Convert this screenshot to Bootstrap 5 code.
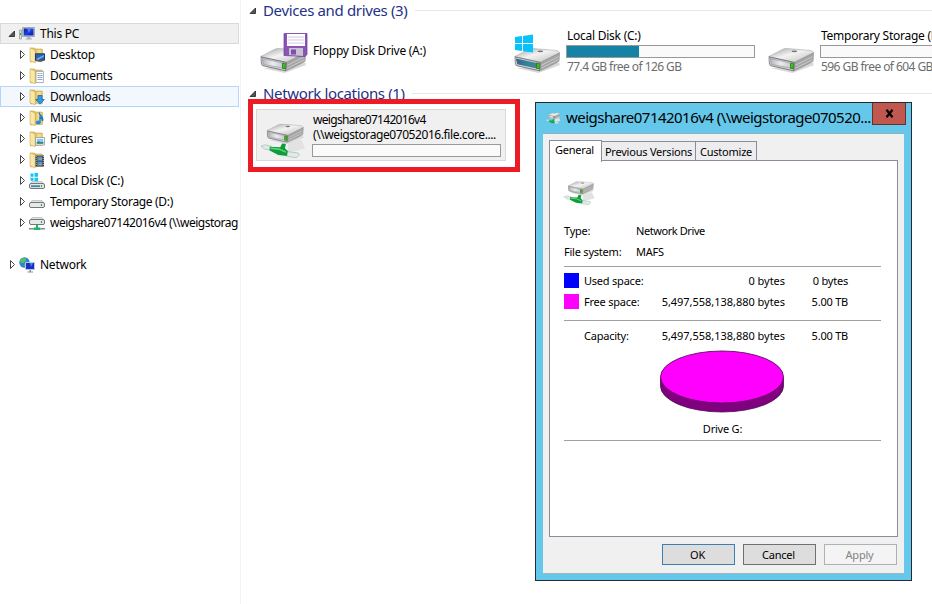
<!DOCTYPE html>
<html lang="en">
<head>
<meta charset="utf-8">
<meta name="viewport" content="width=device-width, initial-scale=1">
<title>This PC</title>
<link href="https://cdn.jsdelivr.net/npm/bootstrap@5.3.0/dist/css/bootstrap.min.css" rel="stylesheet">
<style>
body{width:932px;height:604px;overflow:hidden;background:#fff;color:#000;font-family:"Noto Sans","Open Sans",sans-serif;font-size:12px;line-height:15px;letter-spacing:-.25px}
svg{display:block;flex:none}
.side{width:241px;height:604px;padding-top:23px;border-right:1px solid #f3f3f3}
.node{height:21px;width:239px;white-space:nowrap;overflow:hidden;border:1px solid transparent}
.node.top{padding-left:7px}
.node.sub{padding-left:17px}
.node.current{background:#f0f0f0;border-color:#d9d9d9}
.node.hover{background:#f3f8ff;border-color:#b5d5fb}
.node .tw{width:8px;height:9px;margin-right:3px}
.node .ic{width:16px;height:16px;margin-right:5px}
.tight{letter-spacing:-.7px}
.tight2{letter-spacing:-.42px}
.main{width:691px;height:604px;overflow:hidden}
.group{height:22px;padding:0 0 2px 8px;color:#1e3287;font-size:15px;line-height:20px;letter-spacing:-.35px;white-space:nowrap}
.group span{padding-left:6px}
.group .rule{height:1px;background:#dfe7f1;margin-left:7px}
.tiles{height:61px;width:790px;padding-left:15px}
.tile{width:254px;white-space:nowrap;padding-bottom:1px}
.tile .info{padding-left:5px;margin-top:-3px}
.art{width:52px;height:46px}
.meter{width:189px;height:13px;border:1px solid #999;background:#fafafa;margin:2px 0 1px}
.tile .meter{margin-left:-1px}
.meter div{height:100%;background:#1583a6}
.muted{color:#6d6d6d;letter-spacing:-.56px}
.picked{width:250px;height:52px;margin:4px 0 0 15px;background:#f0f0f0;border:1px solid #d9d9d9;white-space:nowrap}
.picked .info{padding-top:2px}
.picked .info>div:not(.meter){padding-left:1px}
.marker{left:248px;top:99px;width:272px;height:73px;border:5px solid #ed1c24}
.dialogwin{left:535px;top:102px;width:377px;height:479px;background:#65c8ea;border:1px solid #252b33;padding:0 7px 7px;letter-spacing:-.22px}
.titlebar{height:30px;font-size:15px;line-height:29px;letter-spacing:-.53px;padding-left:3px;white-space:nowrap}
.titlebar span{padding-left:5px}
.shut{width:34px;height:22px;background:#c1584f;border:1px solid #5f3331;border-top:0;margin-right:-2px;flex:none}
.client{height:441px;background:#f0f0f0;border-top:1px solid #8db4c4;border-bottom:1px solid #a5b5bd;padding:6px 6px 0;font-size:11px;line-height:14px}
.tabrow{height:20px}
.tabx{height:19px;border:1px solid #8b8b99;border-bottom:0;border-left:0;padding-top:3px;text-align:center;white-space:nowrap;background:#ededf0}
.tabx.on{height:22px;width:53px;border-left:1px solid #8b8b99;background:#fff;position:relative;z-index:1;padding:2px 2px 0 0;margin-bottom:-2px}
.sheet{height:377px;width:349px;border:1px solid #8b8b99;background:#fff;padding:18px 16px 0 14px}
.facts{padding:13px 0 4px}
.line{height:21px;white-space:nowrap}
.sep{height:1px;background:#a0a0a0}
.usage{padding-top:3px}
.sw{width:15px;height:15px;margin-right:5px}
.k{width:72px}.k2{width:57px}.num{width:144px;text-align:right;letter-spacing:-.03px}.sz{width:63px;text-align:right}
.drivename{padding:8px 0 4px}
.pie{margin-left:95px}
.buttons{padding-top:7px;padding-right:1px}
.pushb{width:73px;height:21px;border:1px solid #707070;background:#ddd;text-align:center;line-height:19px;color:#000;padding:0 2px 0 0}
.pushb.def{border-color:#3c7fb1}.pushb.off{border-color:#adb2b5;background:#f4f4f4;color:#838383}
</style>
<script src="https://cdn.jsdelivr.net/npm/bootstrap@5.3.0/dist/js/bootstrap.bundle.min.js"></script>
</head>
<body>
<svg width="0" height="0" class="position-absolute">
<defs>
<linearGradient id="gTop" x1="0" y1="0" x2="1" y2="1"><stop offset="0" stop-color="#9c9c9c"/><stop offset=".45" stop-color="#f3f3f3"/><stop offset="1" stop-color="#b9b9b9"/></linearGradient>
<linearGradient id="gFront" x1="0" y1="0" x2="1" y2="0"><stop offset="0" stop-color="#b4b4ba"/><stop offset=".5" stop-color="#ececf4"/><stop offset="1" stop-color="#c9c9cf"/></linearGradient>
<linearGradient id="gSys" x1="0" y1="0" x2="1" y2="0"><stop offset="0" stop-color="#3c5f83"/><stop offset=".6" stop-color="#2f88a5"/><stop offset="1" stop-color="#557c82"/></linearGradient>
<linearGradient id="gFold" x1="0" y1="0" x2="1" y2="0"><stop offset="0" stop-color="#dcb84f"/><stop offset=".5" stop-color="#f7e294"/><stop offset="1" stop-color="#e8c869"/></linearGradient>
<linearGradient id="gScr" x1="0" y1="0" x2="1" y2="1"><stop offset="0" stop-color="#0a1c9c"/><stop offset=".5" stop-color="#1b3fe0"/><stop offset="1" stop-color="#0818a0"/></linearGradient>
</defs>
<symbol id="box" viewBox="0 0 48 26"><path d="M3 21l22 5 22-8v-3z" fill="#d9d9d9"/><path d="M0 9L15 1.200Q17 .3 19 .5L44 2.600Q46.500 3.500 47 5L27 15z" fill="url(#gTop)" stroke="#9a9a9a" stroke-width=".5"/><path d="M27 15L47 5l-.5 8.500Q46 15 26 24z" fill="#a4a4a4" stroke="#888" stroke-width=".5"/><path d="M28 18l18-9M28 21l18-9" stroke="#d0d0d0" stroke-width=".9"/><path d="M.5 9.200L27 15l-1 8.700L2 18.300Q.5 17 .5 9.200z" fill="#d5d5d5" stroke="#6c6c6c" stroke-width=".9"/><ellipse cx="27" cy="3.500" rx="3" ry="1" fill="#777"/></symbol>
<symbol id="plain" viewBox="0 0 48 26"><use href="#box" width="48" height="26"/><path d="M2 11l21 4.600v5.200L3 17z" fill="url(#gFront)" stroke="#8d8d94" stroke-width=".6"/><path d="M23.200 15.500l2.800.5-.4 5.600-2.600-.4z" fill="#3fcf18" stroke="#0c6107" stroke-width=".7"/></symbol>
<symbol id="system" viewBox="0 0 48 26"><use href="#box" width="48" height="26"/><path d="M1.500 10.800l22 4.800-.4 5.600L3 17z" fill="url(#gSys)"/><path d="M23.200 15.500l2.800.5-.4 5.600-2.600-.4z" fill="#3fcf18" stroke="#0c6107" stroke-width=".7"/></symbol>
<symbol id="netdrive" viewBox="0 0 48 38"><path d="M28 31l18-5-4-9-14 3z" fill="#e2e2e2"/><use href="#plain" x="6" y="0" width="39" height="22"/><path d="M0 24l4-1.500 7 1.500v4l-7-1z" fill="#e0ebe7" stroke="#8fb0a5" stroke-width=".6"/><path d="M27 29.500l12 1.500 1 2-3 3-10-1.500z" fill="#e0ebe7" stroke="#8fb0a5" stroke-width=".6"/><path d="M9 24.500l11 .5 2-4 4 .5-1 4.500 3 3-1 5-9-1-9-4.500z" fill="#0f9c3d"/><path d="M10 26l9 1 7 3" stroke="#5fd97c" stroke-width="1.500" fill="none"/></symbol>
<symbol id="folder" viewBox="0 0 16 16"><path d="M1.500 1h4l1 1H13v12H8l-6.500 1z" fill="#e8c869" stroke="#c8a64a" stroke-width=".6"/><path d="M6 2.500h7.500v12H6z" fill="url(#gFold)" stroke="#d2b057" stroke-width=".5"/><path d="M1 .8L6.200 3v12.800L1 13.800z" fill="#f9e8a5" stroke="#cba850" stroke-width=".6"/></symbol>
<symbol id="closed" viewBox="0 0 8 9"><path d="M2.500 .5v8L6.500 4.500z" fill="#fff" stroke="#444"/></symbol>
<symbol id="open" viewBox="0 0 8 9"><path d="M6.500 2v5.500H1z" fill="#555" stroke="#222" stroke-width=".8"/></symbol>
<symbol id="smalldrive" viewBox="0 0 16 8"><path d="M3 .5h10l2.500 3.500H.5z" fill="#dedede" stroke="#b0b0b0" stroke-width=".6"/><rect x=".5" y="2.500" width="15" height="5" rx="1.500" fill="#e8e8ea" stroke="#77777b"/><path d="M12.500 4v2" stroke="#31a944" stroke-width="1.200"/></symbol>
</svg>
<div class="d-flex">
<nav class="side flex-shrink-0">
<div class="node top current d-flex align-items-center"><svg class="tw"><use href="#open"/></svg><svg class="ic" viewBox="0 0 16 16"><path d="M.5 4h2v9h-2z" fill="#d8dcd8" stroke="#8c948c" stroke-width=".7"/><path d="M1.500 7v2" stroke="#28b838"/><path d="M3.500 1.500h12v9h-12z" fill="#cdd3dc" stroke="#a4abb8"/><path d="M4.700 2.500h9.800v7H4.700z" fill="url(#gScr)"/><path d="M8 3l4 0-2 4z" fill="#4a7bf5"/><path d="M8 11h3.500v1.500H13v1H6.500v-1H8z" fill="#aab0ba"/></svg>This PC</div>
<div class="node sub d-flex align-items-center"><svg class="tw"><use href="#closed"/></svg><svg class="ic" viewBox="0 0 16 16"><use href="#folder"/><path d="M6.500 6.800h9v6.400h-9z" fill="#2e62b5" stroke="#183a69"/><path d="M7 12l8-4v1.500L9 13z" fill="#75b3e4"/><path d="M9 14.500h4" stroke="#777"/></svg>Desktop</div>
<div class="node sub d-flex align-items-center"><svg class="tw"><use href="#closed"/></svg><svg class="ic" viewBox="0 0 16 16"><use href="#folder"/><path d="M7 3.500h7.500v11H7z" fill="#fff" stroke="#9ba5b2" stroke-width=".8"/><path d="M8.500 5.500h2m1 0h2M8.500 7.500h5M8.500 9.500h5M8.500 11.500h5" stroke="#708eb2" stroke-width=".8"/></svg>Documents</div>
<div class="node sub hover d-flex align-items-center"><svg class="tw"><use href="#closed"/></svg><svg class="ic" viewBox="0 0 16 16"><use href="#folder"/><path d="M9 6.500h4v4h2.200L11 15.200 6.800 10.500H9z" fill="#3399e8" stroke="#1567a9" stroke-width=".8"/></svg>Downloads</div>
<div class="node sub d-flex align-items-center"><svg class="tw"><use href="#closed"/></svg><svg class="ic" viewBox="0 0 16 16"><use href="#folder"/><path d="M10 2.500c.5 3 5 4 3.500 8.500 0-2-1.500-3-2.500-3.500V12.500" fill="#3399e8" stroke="#1976c1" stroke-width="1.300"/><ellipse cx="9.300" cy="12.500" rx="2.500" ry="2" fill="#228be0"/></svg>Music</div>
<div class="node sub d-flex align-items-center"><svg class="tw"><use href="#closed"/></svg><svg class="ic" viewBox="0 0 16 16"><use href="#folder"/><path d="M6.500 6.500h9v7.500h-9z" fill="#fff" stroke="#8b99a5" stroke-width=".8"/><path d="M7.700 7.800h6.600v5H7.700z" fill="#8cc8ef"/><path d="M7.700 12.800v-1.500l2-1 2 1 2.600-.5v2z" fill="#3b7e70"/></svg>Pictures</div>
<div class="node sub d-flex align-items-center"><svg class="tw"><use href="#closed"/></svg><svg class="ic" viewBox="0 0 16 16"><use href="#folder"/><path d="M6.500 3.500h8.500v11H6.500z" fill="#3a3f48"/><path d="M8.300 4.500h5v4.300h-5zM8.300 9.500h5v4.300h-5z" fill="#4e91cf"/><path d="M9 8l3-2 1 2zM9 13l3-2 1 2z" fill="#c59a5f"/><path d="M7.200 4v10M14.300 4v10" stroke="#ddd" stroke-width=".8" stroke-dasharray="1 1"/></svg>Videos</div>
<div class="node sub d-flex align-items-center"><svg class="tw"><use href="#closed"/></svg><svg class="ic" viewBox="0 0 16 16"><use href="#smalldrive" y="8" width="16" height="8"/><path d="M2 12.300h9v1.800H2z" fill="#3d87a6"/><path d="M1.500 .5h3v3.300h-3zM5.500 0H9v3.800H5.500zM1.500 4.800h3v3h-3zM5.500 4.800H9v3.500H5.500z" fill="#12c4f7"/></svg>Local Disk (C:)</div>
<div class="node sub d-flex align-items-center"><svg class="tw"><use href="#closed"/></svg><svg class="ic" viewBox="0 0 16 16"><use href="#smalldrive" y="6" width="16" height="8"/></svg><span style="letter-spacing:-.33px">Temporary Storage (D:)</span></div>
<div class="node sub d-flex align-items-center"><svg class="tw"><use href="#closed"/></svg><svg class="ic" viewBox="0 0 16 16"><use href="#smalldrive" y="2" width="16" height="8"/><path d="M7 10h2v2.500h2.500V15h-7v-2.500H7z" fill="#20b36b"/><path d="M0 13.700h4.500M11.500 13.700H16" stroke="#7b9188" stroke-width="1.500"/></svg><span style="letter-spacing:-.5px">weigshare07142016v4 (\\weigstorag</span></div>
<div class="node"></div>
<div class="node top d-flex align-items-center"><svg class="tw"><use href="#closed"/></svg><svg class="ic" viewBox="0 0 16 16"><circle cx="5.500" cy="5.500" r="5.200" fill="#2c83d8"/><path d="M2 2q4-2 5 0T4 6Q2 7 1 4zM5 8l4-3v4l-3 1z" fill="#51c45a"/><path d="M6.500 5.500h9v7h-9z" fill="#1532c2" stroke="#bfc8d8"/><path d="M11 6h3l-2 4z" fill="#4f83ef"/><path d="M10.500 13h1.500v1.500H14v1H8.500v-1h2z" fill="#888fa0"/></svg>Network</div>
</nav>
<main class="main flex-shrink-0">
<div class="group d-flex align-items-center"><svg width="8" height="9"><use href="#open"/></svg><span>Devices and drives (3)</span><div class="rule flex-grow-1"></div></div>
<div class="tiles d-flex">
<div class="tile d-flex align-items-center"><div class="art" style="width:57px"><svg width="57" height="46" viewBox="0 0 57 46"><use href="#plain" x="4" y="19" width="47" height="25"/><path d="M28 4.500h23v21l-2 2-21-1z" fill="#8a55b5" stroke="#6c3a94" stroke-width=".7"/><path d="M31 5h18v12H31z" fill="#fff"/><path d="M32 8h16m-16 3h16m-16 3h16" stroke="#cbb8dc" stroke-width=".8"/><path d="M33 19h14v8l-14-1z" fill="#c9c2d4"/><path d="M35 20.500h5v5h-5z" fill="#7e4fa8"/></svg></div><div class="pb-1">Floppy Disk Drive (A:)</div></div>
<div class="tile d-flex align-items-center"><div class="art"><svg width="52" height="46" viewBox="0 0 52 46"><use href="#system" x="4" y="19" width="47" height="25"/><path d="M5 8l7-1v7H5zM13 6.900l10-1.400V14H13zM5 15h7v7l-7-1zM13 15h10v8.500l-10-1.300z" fill="#08c3fb"/></svg></div><div class="info">
<div>Local Disk (C:)</div><div class="meter"><div style="width:38.600%"></div></div><div class="muted">77.4 GB free of 126 GB</div></div></div>
<div class="tile d-flex align-items-center"><div class="art"><svg width="52" height="46" viewBox="0 0 52 46"><use href="#plain" x="4" y="19" width="47" height="25"/></svg></div><div class="info">
<div>Temporary Storage (D:)</div><div class="meter"><div style="width:0%"></div></div><div class="muted">596 GB free of 604 GB</div></div></div>
</div>
<div class="group d-flex align-items-center"><svg width="8" height="9"><use href="#open"/></svg><span>Network locations (1)</span><div class="rule flex-grow-1"></div></div>
<div class="picked d-flex"><svg width="55" height="50" viewBox="0 0 55 50"><use href="#netdrive" x="4" y="13" width="46" height="37"/></svg><div class="info"><div class="tight">weigshare07142016v4</div><div class="tight2">(\\weigstorage07052016.file.core....</div><div class="meter"></div></div></div>
</main>
</div>
<div class="marker position-absolute"></div>
<section class="dialogwin position-absolute">
<div class="titlebar d-flex"><svg width="15" height="30" viewBox="0 0 15 30"><use href="#netdrive" x="0" y="9" width="15" height="13"/></svg><span class="flex-grow-1">weigshare07142016v4 (\\weigstorage070520...</span><div class="shut d-flex align-items-center justify-content-center"><svg width="9" height="9" viewBox="0 0 9 9"><path d="M1.500 .8l6 7.400M7.500 .8l-6 7.400" stroke="#000" stroke-width="2.200"/></svg></div></div>
<div class="client">
<div class="tabrow d-flex align-items-end"><div class="tabx on">General</div><div class="tabx" style="width:94px">Previous Versions</div><div class="tabx" style="width:61px">Customize</div></div>
<div class="sheet">
<svg width="32" height="28" viewBox="0 0 32 28"><use href="#netdrive" x="0" y="1" width="32" height="27"/></svg>
<div class="facts">
<div class="line d-flex align-items-center"><span class="k">Type:</span><span style="letter-spacing:-.42px">Network Drive</span></div>
<div class="line d-flex align-items-center"><span class="k">File system:</span>MAFS</div></div>
<div class="sep"></div>
<div class="usage"><div class="line d-flex align-items-center"><div class="sw" style="background:#00f"></div><span class="k2">Used space:</span><span class="num">0 bytes</span><span class="sz">0 bytes</span></div>
<div class="line d-flex align-items-center"><div class="sw" style="background:#f0f"></div><span class="k2">Free space:</span><span class="num">5,497,558,138,880 bytes</span><span class="sz">5.00 TB</span></div></div>
<div class="sep mt-2"></div>
<div class="line d-flex align-items-center mt-1"><div class="sw"></div><span class="k2">Capacity:</span><span class="num">5,497,558,138,880 bytes</span><span class="sz">5.00 TB</span></div>
<svg class="pie" width="126" height="68" viewBox="0 -4 126 68"><path d="M1.500 28v8a61.500 26 0 0 0 123 0V28z" fill="#800080" stroke="#4d104d" stroke-width=".8"/><ellipse cx="63" cy="27" rx="61.500" ry="26" fill="#f0f" stroke="#5a105a" stroke-width=".9"/></svg>
<div class="text-center drivename">Drive G:</div><div class="sep"></div>
</div>
<div class="buttons d-flex justify-content-end gap-2"><div class="pushb def">OK</div><div class="pushb">Cancel</div><div class="pushb off">Apply</div></div>
</div>
</section>
</body>
</html>
